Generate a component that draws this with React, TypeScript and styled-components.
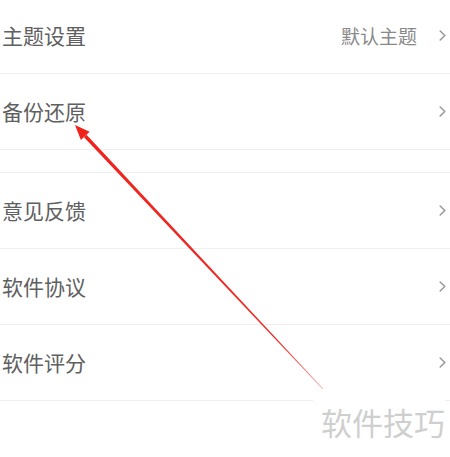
import React from "react";
import styled, { createGlobalStyle } from "styled-components";

const Global = createGlobalStyle`
  html, body { margin: 0; padding: 0; background: #ffffff; }
  body { font-family: "Noto Sans CJK SC", "Noto Sans", sans-serif; }
`;

const Page = styled.div`
  position: relative;
  width: 450px;
  height: 457px;
  overflow: hidden;
  background: #ffffff;
`;

const List = styled.div`
  display: flex;
  flex-direction: column;
  margin-top: -2px;
`;

const Group = styled.div<{ $top?: boolean }>`
  display: flex;
  flex-direction: column;
  border-top: ${(p) => (p.$top ? "1px solid #efefef" : "none")};
`;

const Spacer = styled.div`
  height: 22px;
`;

const Row = styled.div`
  display: flex;
  align-items: center;
  height: 75px;
  padding: 0 4px 0 2px;
  border-bottom: 1px solid #efefef;
  box-sizing: content-box;
`;

const Label = styled.span`
  flex: 1;
  font-size: 21px;
  color: #606060;
  line-height: 1;
`;

const Value = styled.span`
  font-size: 19px;
  color: #8a8a8a;
  margin-right: 22px;
  line-height: 1;
`;

const Chevron = styled.svg`
  width: 7px;
  height: 11px;
  flex: none;
`;

const Watermark = styled.div`
  position: absolute;
  right: 5px;
  top: 400px;
  padding: 0 0 0 8px;
  background: #ffffff;
  font-size: 31px;
  letter-spacing: 0px;
  color: #cfcfcf;
  line-height: 44px;
`;

const Overlay = styled.svg`
  position: absolute;
  left: 0;
  top: 0;
  width: 450px;
  height: 457px;
  pointer-events: none;
`;

const Arrow = () => (
  <Overlay viewBox="0 0 450 457">
    <defs>
      <linearGradient id="fade" x1="84" y1="135" x2="323" y2="389" gradientUnits="userSpaceOnUse">
        <stop offset="0" stopColor="#f0231b" />
        <stop offset="0.8" stopColor="#ee2a24" />
        <stop offset="1" stopColor="#f7a6a2" />
      </linearGradient>
    </defs>
    <polygon
      points="86.55,134.73 323.29,388.73 322.71,389.27 83.99,137.13"
      fill="url(#fade)"
    />
    <polygon points="75,125 89.64,131.82 80.9,140.04" fill="#f0231b" />
  </Overlay>
);

const ChevronIcon = () => (
  <Chevron viewBox="0 0 7 11">
    <path d="M1.2 1 L5.8 5.5 L1.2 10" fill="none" stroke="#9a9a9a" strokeWidth="1.6" strokeLinecap="round" strokeLinejoin="round" />
  </Chevron>
);

type Item = { label: string; value?: string };

const SettingRow = ({ label, value }: Item) => (
  <Row>
    <Label>{label}</Label>
    {value && <Value>{value}</Value>}
    <ChevronIcon />
  </Row>
);

const group1: Item[] = [{ label: "主题设置", value: "默认主题" }, { label: "备份还原" }];
const group2: Item[] = [{ label: "意见反馈" }, { label: "软件协议" }, { label: "软件评分" }];

export default function App() {
  return (
    <>
      <Global />
      <Page>
        <List>
          <Group>
            {group1.map((it) => (
              <SettingRow key={it.label} {...it} />
            ))}
          </Group>
          <Spacer />
          <Group $top>
            {group2.map((it) => (
              <SettingRow key={it.label} {...it} />
            ))}
          </Group>
        </List>
        <Watermark>软件技巧</Watermark>
        <Arrow />
      </Page>
    </>
  );
}
